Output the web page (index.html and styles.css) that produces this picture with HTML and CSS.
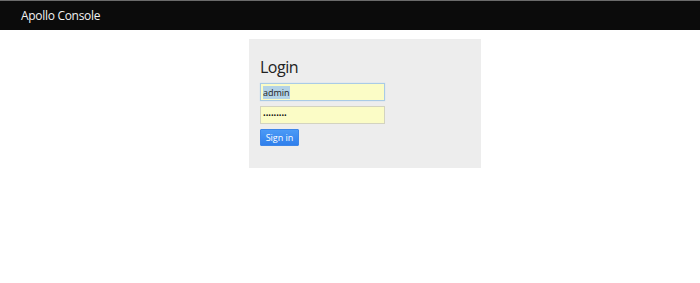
FILE: index.html
```html
<!DOCTYPE html>
<html>
<head>
<meta charset="utf-8">
<title>Apollo Console</title>
<link rel="stylesheet" href="styles.css">
</head>
<body>
<header class="topbar">
  <span class="brand">Apollo Console</span>
</header>
<main class="page">
  <section class="panel">
    <h1 class="title">Login</h1>
    <form class="form">
      <input class="field field-focus" id="username" type="text" value="admin">
      <input class="field field-pass" type="password" value="password1">
      <button class="btn" type="button">Sign in</button>
    </form>
  </section>
</main>
<script src="script.js"></script>
</body>
</html>
```
FILE: styles.css
```css
html, body {
  margin: 0;
  padding: 0;
  background: #ffffff;
  font-family: "Open Sans", "DejaVu Sans", sans-serif;
}
.topbar {
  height: 29px;
  background: #0b0b0b;
  border-top: 1px solid #6b6b6b;
  display: flex;
  align-items: center;
  padding-left: 21px;
}
.brand {
  color: #f2f2f2;
  font-size: 12px;
  letter-spacing: -0.3px;
  line-height: 1;
}
.page {
  padding: 9px 0 0 249px;
}
.panel {
  width: 232px;
  height: 129px;
  box-sizing: border-box;
  background: #ededed;
  padding: 17px 11px 0 11px;
}
.title {
  margin: 0 0 5px 0;
  font-weight: 400;
  font-size: 16px;
  letter-spacing: -0.5px;
  line-height: 22px;
  color: #222;
}
.form {
  display: flex;
  flex-direction: column;
  align-items: flex-start;
  gap: 5px;
}
.field {
  width: 125px;
  height: 18px;
  box-sizing: border-box;
  margin: 0;
  padding: 0 2px;
  border: 1px solid #d3d3c0;
  background: #fbfcc6;
  font-family: "Open Sans", "DejaVu Sans", sans-serif;
  font-size: 9px;
  color: #222;
  outline: none;
}
.field-pass {
  font-size: 7px;
  color: #111;
}
.field-focus {
  border-color: #a9cbe6;
  box-shadow: 0 0 1px #b9d7ee;
}
.field-focus::selection {
  background: #b4d3e6;
}
.btn {
  width: 39px;
  height: 17px;
  margin: 0;
  padding: 0;
  border: 1px solid #3d86e8;
  background: linear-gradient(#4b9af6, #2f7fec);
  color: #ffffff;
  font-family: "Open Sans", "DejaVu Sans", sans-serif;
  font-size: 9px;
  line-height: 15px;
  border-radius: 1px;
}
```
FILE: script.js
```js
var u = document.getElementById('username');
u.focus();
u.select();
```
